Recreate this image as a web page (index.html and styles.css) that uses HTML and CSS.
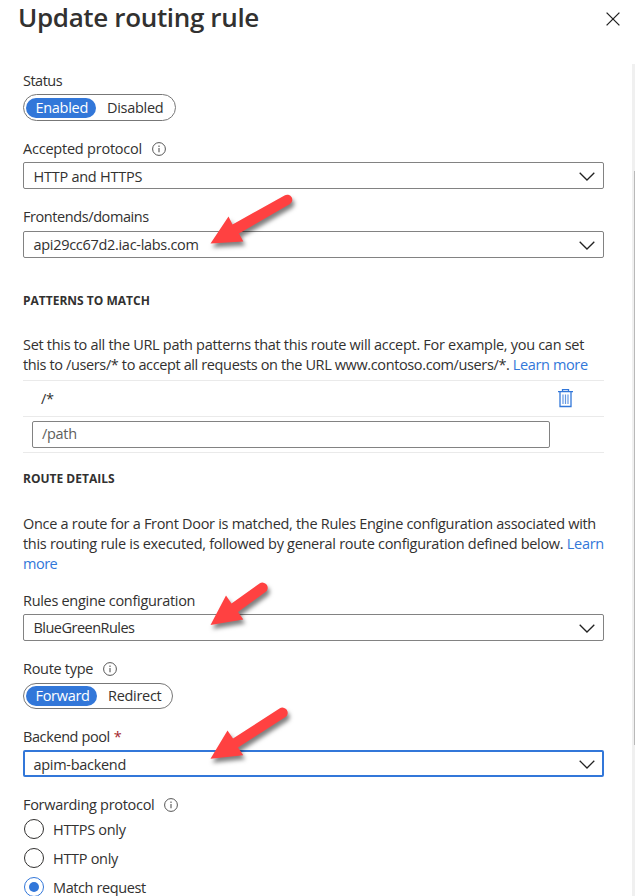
FILE: index.html
```html
<!DOCTYPE html>
<html lang="en">
<head>
<meta charset="utf-8">
<title>Update routing rule</title>
<link rel="stylesheet" href="styles.css">
</head>
<body>
<svg class="defs" width="0" height="0" aria-hidden="true">
  <symbol id="chevron" viewBox="0 0 16 9"><path d="M.7.7 8 8 15.300.7" fill="none" stroke="#222" stroke-width="1.3"/></symbol>
  <symbol id="info" viewBox="0 0 14 14"><circle cx="7" cy="7" r="6.4" fill="none" stroke="#555" stroke-width="1"/><path d="M7 6v4.300M7 3.600v1.300" stroke="#555" stroke-width="1.100"/></symbol>
</svg>
<header class="header">
  <h1 class="title">Update routing rule</h1>
  <svg class="close" viewBox="0 0 14 14"><path d="M.6.600 13.400 13.400M13.400.600.600 13.400" stroke="#222" stroke-width="1.300"/></svg>
</header>
<div class="content">
  <main class="form">
    <div class="label t-status">Status</div>
    <div class="toggle toggle-status"><span class="option selected">Enabled</span><span class="option">Disabled</span></div>

    <div class="label"><span class="t-accepted">Accepted protocol</span><svg class="info"><use href="#info"/></svg></div>
    <div class="select"><span class="value t-http">HTTP and HTTPS</span><svg class="chevron"><use href="#chevron"/></svg></div>

    <div class="label t-front">Frontends/domains</div>
    <div class="select lower"><span>api29cc67d2.iac-labs.com</span><svg class="chevron"><use href="#chevron"/></svg>
      <svg class="arrow arrow-front" viewBox="0 0 100 70"><path d="M10.500 53.500 28.500 26.500 32.500 34.500 84.500 5.500A5 5 0 0 1 90 14L39 43.500 43.300 51.500Z"/></svg>
    </div>

    <h2 class="heading heading-patterns">PATTERNS TO MATCH</h2>
    <p class="text">Set this to all the URL path patterns that this route will accept. For example, you can set<br><span class="text-tight">this to /users/* to accept all requests on the URL www.contoso.com/users/*. <a>Learn more</a></span></p>
    <div class="patterns">
      <div class="row"><span>/*</span>
        <svg class="trash" viewBox="0 0 15 19" fill="none" stroke="#3277d9"><path d="M0 2.700h15M4.500 2.500V.700h6v1.800M2 3v14.500h11V3" stroke-width="1.300"/><path d="M5 5.500v9.500M7.500 5.500v9.500M10 5.500v9.500" stroke-width="1.200" opacity=".75"/></svg>
      </div>
      <div class="row"><div class="input">/path</div></div>
    </div>

    <h2 class="heading heading-route">ROUTE DETAILS</h2>
    <p class="text">Once a route for a Front Door is matched, the Rules Engine configuration associated with<br>this routing rule is executed, followed by general route configuration defined below. <a>Learn</a><br><a class="t-more">more</a></p>

    <div class="label label-rules">Rules engine configuration</div>
    <div class="select"><span class="t-blue">BlueGreenRules</span><svg class="chevron"><use href="#chevron"/></svg>
      <svg class="arrow arrow-rules" viewBox="0 0 100 70"><path d="M10.500 55 26 25.500 31.500 33.500 59.500 13.500A5 5 0 0 1 65.500 22L38 42 43.300 49.500Z"/></svg>
    </div>

    <div class="label"><span>Route type</span><svg class="info"><use href="#info"/></svg></div>
    <div class="toggle toggle-type"><span class="option selected">Forward</span><span class="option">Redirect</span></div>

    <div class="label"><span class="t-pool">Backend pool</span><span class="required">*</span></div>
    <div class="select focused"><span class="value">apim-backend</span><svg class="chevron"><use href="#chevron"/></svg>
      <svg class="arrow arrow-pool" viewBox="0 0 100 70"><path d="M10.500 57.700 27.500 29.500 33 37.500 79.500 7.500A5 5 0 0 1 85.500 16L38 46.500 43.300 54.300Z"/></svg>
    </div>

    <div class="label"><span>Forwarding protocol</span><svg class="info"><use href="#info"/></svg></div>
    <div class="radios">
      <div class="radio"><i class="dot"></i><span>HTTPS only</span></div>
      <div class="radio"><i class="dot"></i><span>HTTP only</span></div>
      <div class="radio checked"><i class="dot"></i><span class="t-match">Match request</span></div>
    </div>
  </main>
  <div class="scrollbar"><div class="thumb"></div></div>
</div>
</body>
</html>
```
FILE: styles.css
```css
* { box-sizing: border-box; }
body {
  margin: 0;
  height: 896px;
  overflow: hidden;
  background: #fff;
  color: #323130;
  font: 14.5px/20px "Open Sans", "Noto Sans", sans-serif;
  letter-spacing: -0.3px;
  white-space: nowrap;
}
.defs { position: absolute; }
.header {
  display: flex;
  justify-content: space-between;
  align-items: flex-start;
  height: 64px;
  padding: 0 15px 0 18px;
}
.title { margin: 0; font-size: 26px; line-height: 34px; font-weight: 600; letter-spacing: -0.35px; }
.close { width: 14px; height: 14px; margin-top: 12px; }
.content { display: flex; justify-content: space-between; height: 832px; }
.form { width: 581px; margin-left: 23px; padding-top: 7px; }
.label { display: flex; align-items: center; height: 20px; margin-bottom: 3px; }
.info { width: 14px; height: 14px; margin-left: 10px; }
.required { margin-left: 4px; color: #a4262c; }
.t-status { letter-spacing: -0.5px; }
.t-accepted { letter-spacing: -0.22px; }
.t-http { letter-spacing: -0.25px; }
.t-front { letter-spacing: -0.42px; }
.t-blue { letter-spacing: -0.52px; }
.t-pool { letter-spacing: -0.4px; }
.t-match { letter-spacing: -0.4px; }
.t-more { letter-spacing: -0.5px; }
.toggle {
  display: flex;
  align-items: center;
  height: 27px;
  margin-bottom: 18px;
  padding: 0 2px;
  border: 1px solid #777;
  border-radius: 14px;
}
.toggle-status { width: 153px; }
.toggle-type { width: 150px; height: 26px; margin-top: 4px; }
.option { height: 20px; padding: 0 10px; border-radius: 10px; line-height: 19px; }
.selected { width: 70px; margin-right: 1px; padding-left: 9.5px; background: #3277d9; color: #fff; }
.toggle-type .selected { width: 71px; }
.select {
  position: relative;
  display: flex;
  align-items: center;
  justify-content: space-between;
  height: 27px;
  margin-bottom: 18px;
  padding: 0 8px 0 9.5px;
  border: 1px solid #828282;
  border-radius: 2px;
}
.value { padding-top: 2px; }
.lower { margin-top: 4px; }
.focused { padding: 0 7px 0 8.5px; border: 2px solid #3277d9; }
.chevron { width: 16px; height: 9px; margin-top: 1px; }
.arrow {
  position: absolute;
  width: 100px;
  height: 70px;
  fill: #ff4141;
  filter: drop-shadow(2px 4px 2px rgba(0, 0, 0, .5));
}
.arrow-front { left: 176px; top: -42px; }
.arrow-rules { left: 176px; top: -45px; }
.arrow-pool { left: 175px; top: -51px; }
.heading { margin: 0; font-size: 12px; line-height: 20px; font-weight: 700; letter-spacing: 0; }
.heading-patterns { margin-top: 32px; padding-top: 1px; height: 20px; }
.heading-route { margin-top: 16px; }
.text { margin: 25px 0 0; }
.text-tight { letter-spacing: -0.375px; }
a { color: #3277d9; }
.patterns { margin-top: 5px; border-top: 1px solid #eaeaea; }
.row {
  display: flex;
  align-items: center;
  justify-content: space-between;
  height: 36px;
  padding: 0 31.500px 0 18px;
  border-bottom: 1px solid #eaeaea;
}
.trash { width: 15px; height: 19px; }
.row:last-child { padding: 0 54px 0 9px; }
.input { width: 518px; height: 27px; padding-left: 9px; border: 1px solid #828282; border-radius: 2px; line-height: 24px; color: #605e5c; }
.label-rules { margin-top: 17px; }
.radios { display: flex; flex-direction: column; gap: 9px; margin-top: 4px; }
.radio { display: flex; align-items: center; height: 20px; padding-left: 1px; gap: 9px; }
.radio span { padding-top: 2px; }
.dot { display: flex; width: 20px; height: 20px; border: 1px solid #323130; border-radius: 50%; }
.checked .dot { border-color: #3277d9; }
.checked .dot::after { content: ""; width: 10px; height: 10px; margin: auto; border-radius: 50%; background: #3277d9; }
.scrollbar { width: 3px; height: 832px; padding: 107px 0 0 2px; background: #f0f0f0; }
.thumb { height: 574px; background: #b9b9b9; }
```
